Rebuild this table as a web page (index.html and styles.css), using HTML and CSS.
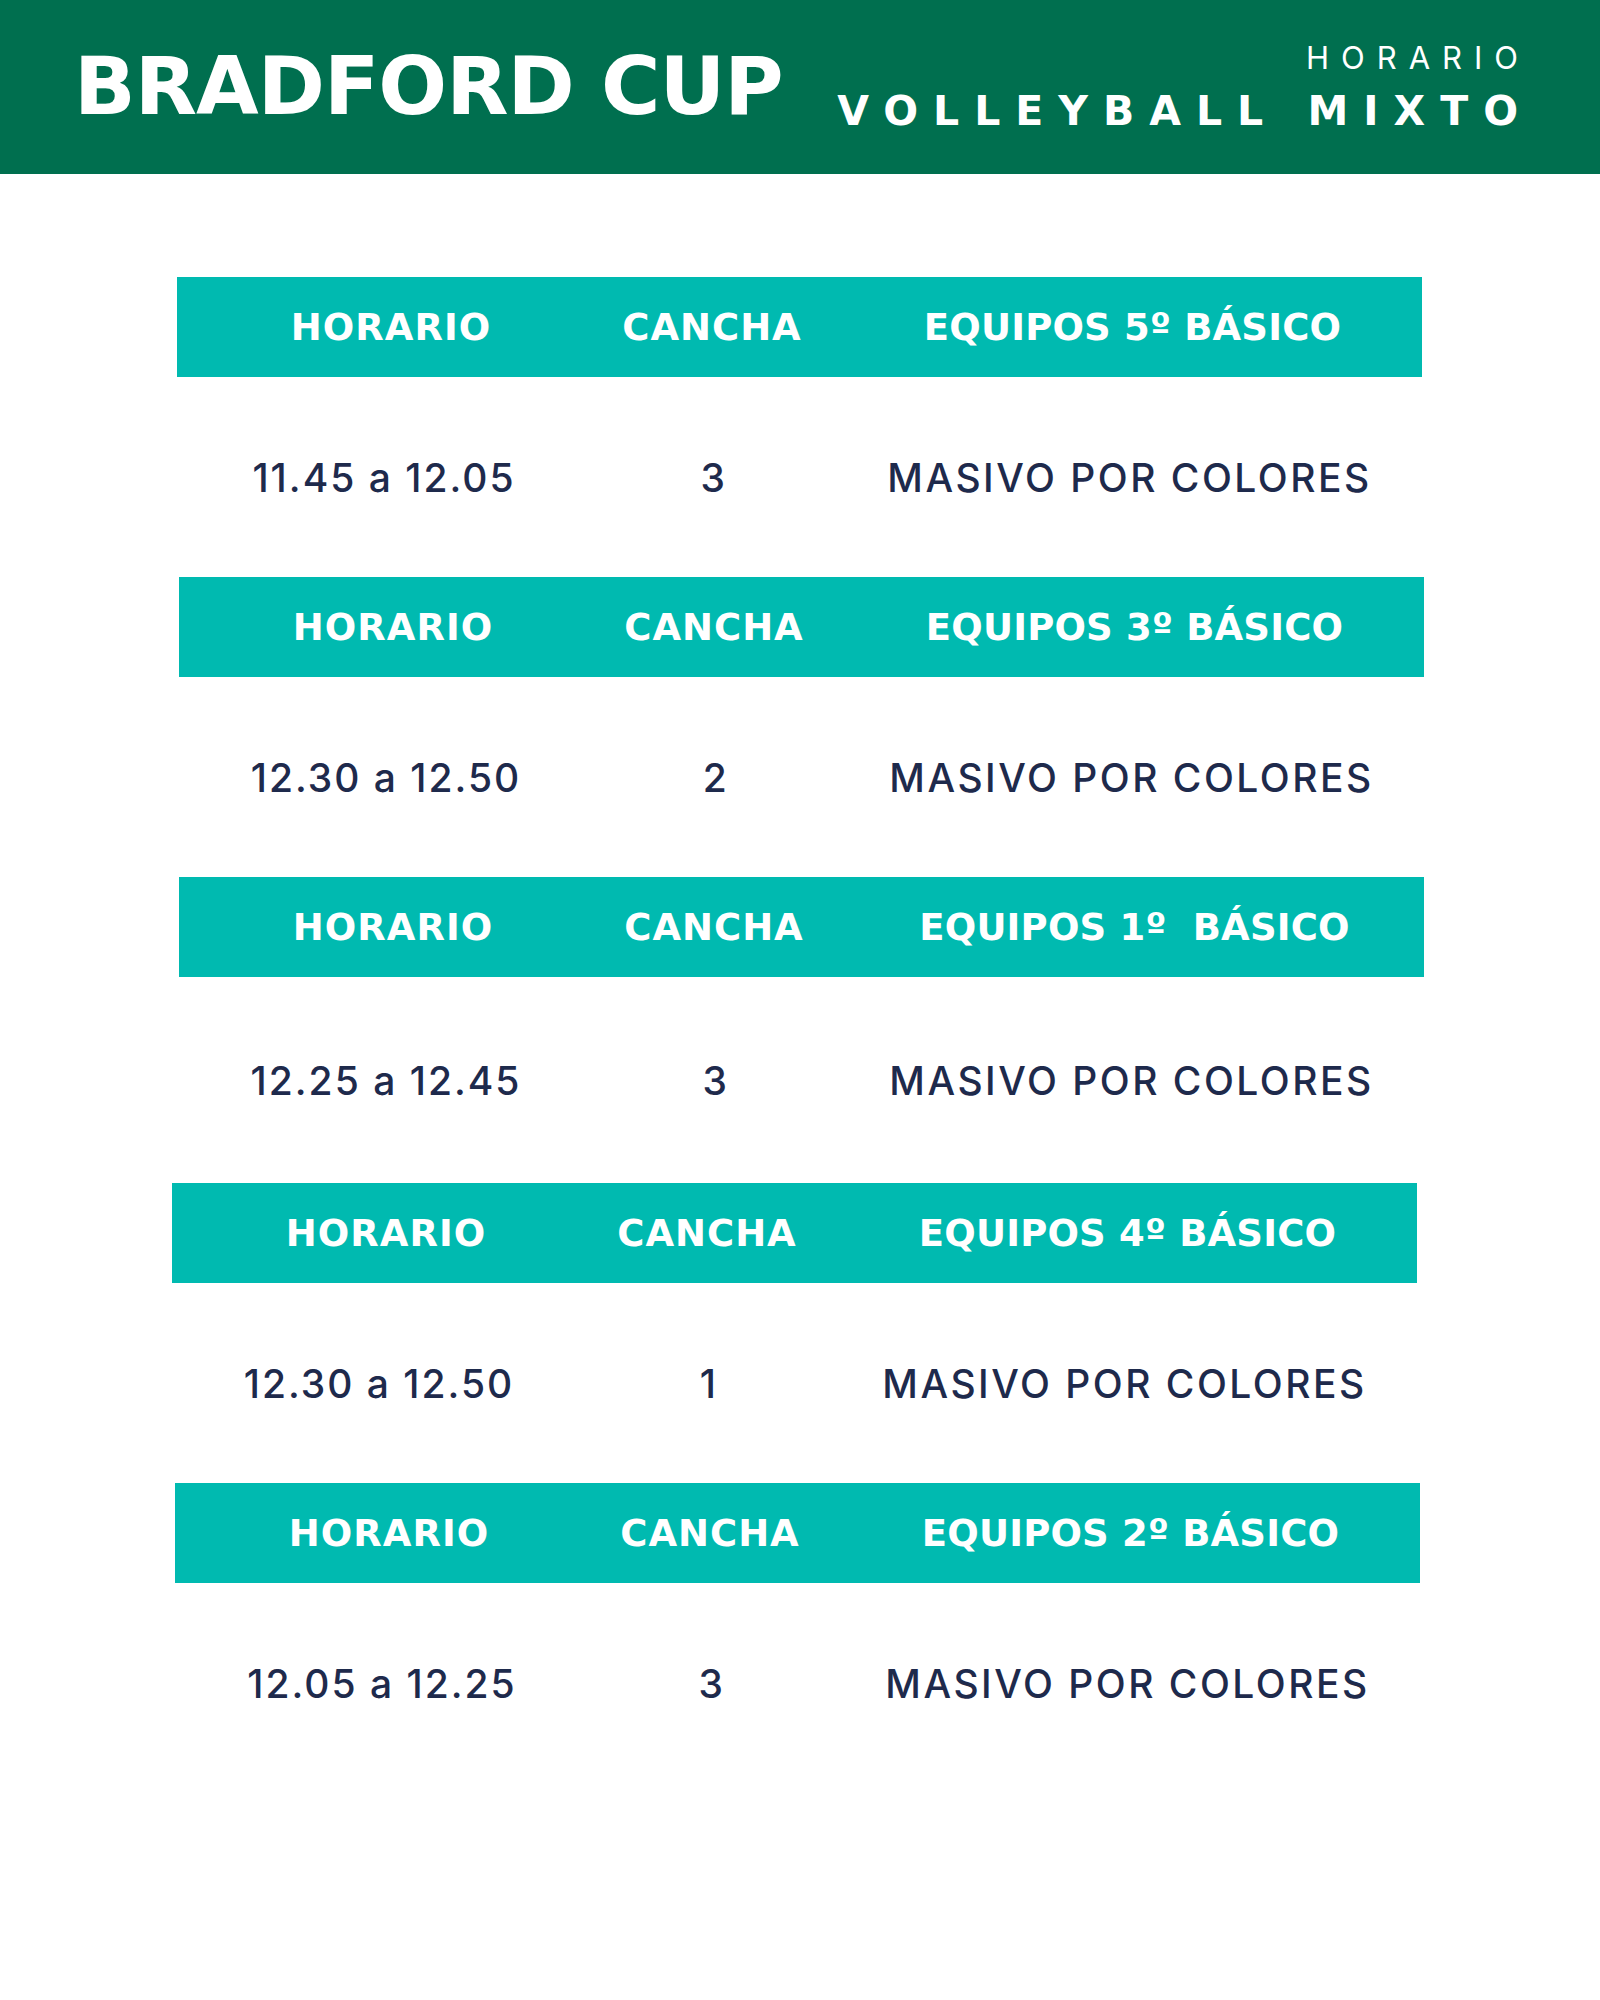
FILE: index.html
```html
<!DOCTYPE html>
<html lang="es">
<head>
<meta charset="utf-8">
<title>Bradford Cup - Horario Volleyball Mixto</title>
<link rel="stylesheet" href="styles.css">
</head>
<body>
<header class="topbar">
  <h1 class="brand">BRADFORD CUP</h1>
  <div class="subtitle">
    <span class="subtitle-small">HORARIO</span>
    <span class="subtitle-big">VOLLEYBALL MIXTO</span>
  </div>
</header>
<main class="schedule">
  <section class="block">
    <div class="band">
      <span class="cell c1">HORARIO</span>
      <span class="cell c2">CANCHA</span>
      <span class="cell c3">EQUIPOS 5º BÁSICO</span>
    </div>
    <div class="row">
      <span class="cell c1">11.45 a 12.05</span>
      <span class="cell c2">3</span>
      <span class="cell c3">MASIVO POR COLORES</span>
    </div>
  </section>
  <section class="block shift-r">
    <div class="band">
      <span class="cell c1">HORARIO</span>
      <span class="cell c2">CANCHA</span>
      <span class="cell c3">EQUIPOS 3º BÁSICO</span>
    </div>
    <div class="row">
      <span class="cell c1">12.30 a 12.50</span>
      <span class="cell c2">2</span>
      <span class="cell c3">MASIVO POR COLORES</span>
    </div>
  </section>
  <section class="block shift-r tall">
    <div class="band">
      <span class="cell c1">HORARIO</span>
      <span class="cell c2">CANCHA</span>
      <span class="cell c3">EQUIPOS 1º&nbsp; BÁSICO</span>
    </div>
    <div class="row">
      <span class="cell c1">12.25 a 12.45</span>
      <span class="cell c2">3</span>
      <span class="cell c3">MASIVO POR COLORES</span>
    </div>
  </section>
  <section class="block shift-l">
    <div class="band">
      <span class="cell c1">HORARIO</span>
      <span class="cell c2">CANCHA</span>
      <span class="cell c3">EQUIPOS 4º BÁSICO</span>
    </div>
    <div class="row">
      <span class="cell c1">12.30 a 12.50</span>
      <span class="cell c2">1</span>
      <span class="cell c3">MASIVO POR COLORES</span>
    </div>
  </section>
  <section class="block shift-l2">
    <div class="band">
      <span class="cell c1">HORARIO</span>
      <span class="cell c2">CANCHA</span>
      <span class="cell c3">EQUIPOS 2º BÁSICO</span>
    </div>
    <div class="row">
      <span class="cell c1">12.05 a 12.25</span>
      <span class="cell c2">3</span>
      <span class="cell c3">MASIVO POR COLORES</span>
    </div>
  </section>
</main>
</body>
</html>
```
FILE: styles.css
```css
* { box-sizing: border-box; }
html, body { margin: 0; padding: 0; background: #ffffff; }
body {
  font-family: Inter, "DejaVu Sans", sans-serif;
  width: 1600px;
  min-height: 2000px;
}
.topbar {
  height: 174px;
  background: #006f4f;
  color: #ffffff;
  display: flex;
  align-items: center;
  justify-content: space-between;
  padding: 0 82px 0 74px;
}
.brand {
  margin: 0;
  font-family: "DejaVu Sans", Inter, sans-serif;
  font-size: 81px;
  font-weight: 700;
  letter-spacing: -1px;
  line-height: 1;
  margin-top: -2px;
}
.subtitle {
  display: flex;
  flex-direction: column;
  align-items: flex-end;
  margin-top: 0;
}
.subtitle-small {
  font-size: 31px;
  font-weight: 400;
  letter-spacing: 12px;
  margin-right: -12px;
  line-height: 1;
}
.subtitle-big {
  font-family: "DejaVu Sans", Inter, sans-serif;
  font-size: 41px;
  font-weight: 700;
  letter-spacing: 15px;
  margin-right: -15px;
  line-height: 1;
  margin-top: 18px;
}
.schedule {
  padding-top: 103px;
  display: flex;
  flex-direction: column;
}
.block {
  width: 1245px;
  margin-left: 177px;
  display: flex;
  flex-direction: column;
}
.block.shift-r { margin-left: 179px; }
.block.shift-l { margin-left: 172px; }
.block.shift-l2 { margin-left: 175px; }
.band {
  height: 100px;
  background: #00bab0;
  color: #ffffff;
  display: grid;
  grid-template-columns: 428px 214px 1fr;
  align-items: center;
  font-family: "DejaVu Sans", Inter, sans-serif;
  font-weight: 700;
  font-size: 37px;
  letter-spacing: 1px;
}
.row {
  height: 200px;
  display: grid;
  grid-template-columns: 414px 246px 1fr;
  align-items: center;
  color: #1e2a4c;
  font-weight: 500;
  font-size: 39px;
  letter-spacing: 2.5px;
}
.block.tall .row { height: 206px; }
.cell { text-align: center; white-space: nowrap; }
.band .c3 { padding-left: 24px; letter-spacing: 0.2px; }
.row .c1 { letter-spacing: 2px; }
```
